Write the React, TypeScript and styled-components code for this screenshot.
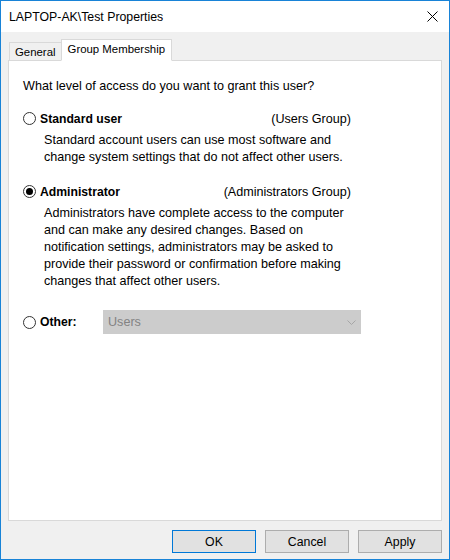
import styled, { createGlobalStyle } from 'styled-components'

const GlobalStyle = createGlobalStyle`
  html, body {
    margin: 0;
    padding: 0;
    background: #ffffff;
  }
  body {
    font-family: "Liberation Sans", Arial, sans-serif;
    font-size: 12.6px;
    color: #000000;
  }
`

const Window = styled.div`
  box-sizing: border-box;
  width: 450px;
  height: 560px;
  border: 1px solid #1883d7;
  display: flex;
  flex-direction: column;
  background: #f0f0f0;
`

const TitleBar = styled.div`
  height: 31px;
  background: #ffffff;
  display: flex;
  align-items: center;
  justify-content: space-between;
  padding: 0 11px 0 8px;
`

const Title = styled.span`
  font-size: 12.3px;
  line-height: 16px;
  padding-top: 1px;
`

const CloseButton = styled.div`
  width: 12px;
  height: 12px;
  display: flex;
  align-items: center;
  justify-content: center;
`

const Body = styled.div`
  flex: 1;
  display: flex;
  flex-direction: column;
  padding: 7px 7px 0 7px;
`

const TabStrip = styled.div`
  display: flex;
  align-items: flex-end;
  height: 22px;
  padding-left: 1px;
  margin-bottom: -1px;
  position: relative;
  z-index: 1;
`

const Tab = styled.div<{ $active?: boolean }>`
  box-sizing: border-box;
  height: ${(p) => (p.$active ? '22px' : '19px')};
  padding: 0 ${(p) => (p.$active ? '6px' : '5px')};
  margin-left: ${(p) => (p.$active ? '-1px' : '0')};
  border: 1px solid #d9d9d9;
  border-bottom: ${(p) => (p.$active ? '1px solid #ffffff' : '1px solid #d9d9d9')};
  background: ${(p) => (p.$active ? '#ffffff' : '#f0f0f0')};
  line-height: ${(p) => (p.$active ? '18px' : '18px')};
  font-size: 11.4px;
`

const Panel = styled.div`
  flex: 1;
  background: #ffffff;
  border: 1px solid #d9d9d9;
  padding: 17px 0 0 14px;
  display: flex;
  flex-direction: column;
`

const Question = styled.div`
  line-height: 17px;
`

const Option = styled.div<{ $gap: number }>`
  margin-top: ${(p) => p.$gap}px;
  width: 328px;
`

const OptionRow = styled.div`
  display: flex;
  align-items: center;
  height: 17px;
`

const OtherRow = styled(OptionRow)`
  height: 24px;
  width: 400px;
`

const Radio = styled.span<{ $checked?: boolean }>`
  box-sizing: border-box;
  width: 13px;
  height: 13px;
  border-radius: 50%;
  border: 1px solid #333333;
  background: #ffffff;
  display: flex;
  align-items: center;
  justify-content: center;
  margin-right: 4px;
  flex-shrink: 0;

  &::after {
    content: '';
    display: ${(p) => (p.$checked ? 'block' : 'none')};
    width: 7px;
    height: 7px;
    border-radius: 50%;
    background: #000000;
  }
`

const OptionLabel = styled.span<{ $width?: number }>`
  font-weight: bold;
  font-size: 12.2px;
  ${(p) => (p.$width ? `width: ${p.$width}px; flex-shrink: 0;` : 'flex: 1;')}
`

const GroupName = styled.span`
  margin-left: auto;
`

const Description = styled.div`
  margin: 5px 0 0 21px;
  line-height: 17px;
  white-space: pre-line;
`

const Combo = styled.div`
  box-sizing: border-box;
  width: 258px;
  flex-shrink: 0;
  height: 24px;
  background: #cccccc;
  border: 1px solid #cccccc;
  color: #838383;
  display: flex;
  align-items: center;
  justify-content: space-between;
  padding: 0 4px 0 4px;
`

const Footer = styled.div`
  display: flex;
  justify-content: flex-end;
  gap: 9px;
  padding: 9px 0 6px 0;
`

const Button = styled.button<{ $default?: boolean }>`
  box-sizing: border-box;
  width: 84px;
  height: 23px;
  background: #e1e1e1;
  border: 1px solid ${(p) => (p.$default ? '#0078d7' : '#adadad')};
  font-family: "Liberation Sans", Arial, sans-serif;
  font-size: 12.3px;
  color: #000000;
  padding: 0;
`

const Chevron = () => (
  <svg width="9" height="5" viewBox="0 0 9 5">
    <path d="M0.5 0.5 L4.5 4.5 L8.5 0.5" fill="none" stroke="#a6a6a6" strokeWidth="1" />
  </svg>
)

const CloseIcon = () => (
  <svg width="11" height="11" viewBox="0 0 11 11">
    <path d="M0.5 0.5 L10.5 10.5 M10.5 0.5 L0.5 10.5" stroke="#000000" strokeWidth="1" />
  </svg>
)

export default function App() {
  return (
    <>
      <GlobalStyle />
      <Window>
        <TitleBar>
          <Title>LAPTOP-AK\Test Properties</Title>
          <CloseButton>
            <CloseIcon />
          </CloseButton>
        </TitleBar>
        <Body>
          <TabStrip>
            <Tab>General</Tab>
            <Tab $active>Group Membership</Tab>
          </TabStrip>
          <Panel>
            <Question>What level of access do you want to grant this user?</Question>
            <Option $gap={15}>
              <OptionRow>
                <Radio />
                <OptionLabel>Standard user</OptionLabel>
                <GroupName>(Users Group)</GroupName>
              </OptionRow>
              <Description>
                {'Standard account users can use most software and\nchange system settings that do not affect other users.'}
              </Description>
            </Option>
            <Option $gap={17}>
              <OptionRow>
                <Radio $checked />
                <OptionLabel>Administrator</OptionLabel>
                <GroupName>(Administrators Group)</GroupName>
              </OptionRow>
              <Description>
                {'Administrators have complete access to the computer\nand can make any desired changes. Based on\nnotification settings, administrators may be asked to\nprovide their password or confirmation before making\nchanges that affect other users.'}
              </Description>
            </Option>
            <Option $gap={20}>
              <OtherRow>
                <Radio />
                <OptionLabel $width={63}>Other:</OptionLabel>
                <Combo>
                  <span>Users</span>
                  <Chevron />
                </Combo>
              </OtherRow>
            </Option>
          </Panel>
          <Footer>
            <Button $default>OK</Button>
            <Button>Cancel</Button>
            <Button>Apply</Button>
          </Footer>
        </Body>
      </Window>
    </>
  )
}
